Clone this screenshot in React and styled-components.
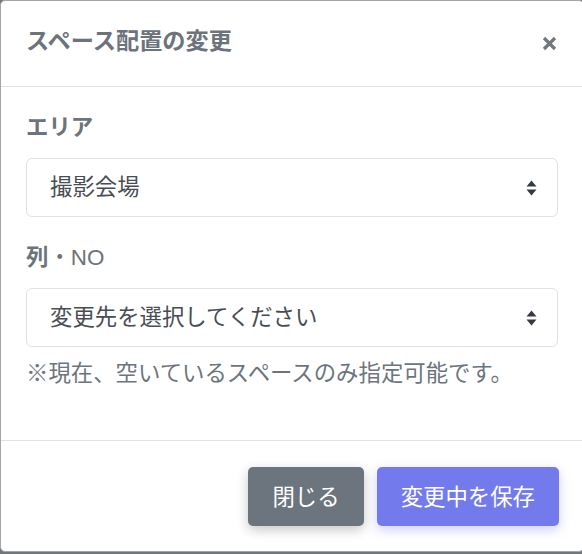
import styled, { createGlobalStyle } from "styled-components";

const GlobalStyle = createGlobalStyle`
  html, body {
    margin: 0;
    padding: 0;
    overflow: hidden;
    background: #70767c;
  }
  body {
    font-family: "Liberation Sans", "Noto Sans CJK JP", sans-serif;
  }
  * {
    box-sizing: border-box;
  }
`;

const colors = {
  gray: "#6c737b",
  text: "#474d54",
  line: "#dee2e6",
  secondary: "#6c757d",
  primary: "#737bec",
};

const CloseIcon = () => (
  <svg width="15" height="15" viewBox="0 0 15 15">
    <path
      d="M2 2 L13 13 M13 2 L2 13"
      stroke="#72777d"
      strokeWidth="3.2"
      strokeLinecap="butt"
      fill="none"
    />
  </svg>
);

const SortIcon = () => (
  <svg width="11" height="16" viewBox="0 0 11 16">
    <path d="M5.5 0.5 L10.5 6.5 L0.5 6.5 Z" fill="#343a40" />
    <path d="M0.5 9.5 L10.5 9.5 L5.5 15.5 Z" fill="#343a40" />
  </svg>
);

const App = () => {
  return (
    <>
      <GlobalStyle />
      <Dialog>
        <Header>
          <Title>スペース配置の変更</Title>
          <CloseButton aria-label="close">
            <CloseIcon />
          </CloseButton>
        </Header>
        <Body>
          <Label>エリア</Label>
          <SelectBox>
            <SelectText>撮影会場</SelectText>
            <SortIcon />
          </SelectBox>
          <Label>
            列<LabelLatin>・NO</LabelLatin>
          </Label>
          <SelectBox $last>
            <SelectText>変更先を選択してください</SelectText>
            <SortIcon />
          </SelectBox>
          <Note>※現在、空いているスペースのみ指定可能です。</Note>
        </Body>
        <Footer>
          <Button $bg={colors.secondary} $glow="rgba(0, 0, 0, 0.22)">
            閉じる
          </Button>
          <Button $bg={colors.primary} $glow="rgba(115, 123, 236, 0.35)">
            変更中を保存
          </Button>
        </Footer>
      </Dialog>
    </>
  );
};

export default App;

const Dialog = styled.div`
  width: 584px;
  height: 552px;
  background: #fff;
  border: 1px solid #a2a6ab;
  border-radius: 5px;
  display: flex;
  flex-direction: column;
`;

const Header = styled.div`
  height: 86px;
  padding: 0 25px;
  display: flex;
  align-items: center;
  justify-content: space-between;
  border-bottom: 1px solid ${colors.line};
`;

const Title = styled.h5`
  margin: 0;
  font-size: 23.2px;
  font-weight: 700;
  line-height: 1.2;
  color: ${colors.gray};
  margin-top: -3px;
`;

const CloseButton = styled.button`
  border: none;
  background: none;
  padding: 0;
  margin-right: 1px;
  display: flex;
  cursor: pointer;
`;

const Body = styled.div`
  padding: 24px 25px 50px 25px;
  display: flex;
  flex-direction: column;
  border-bottom: 1px solid ${colors.line};
`;

const Label = styled.label`
  font-size: 22.4px;
  font-weight: 700;
  line-height: 33px;
  color: ${colors.gray};
  margin-bottom: 14px;
`;

const LabelLatin = styled.span`
  font-weight: 400;
`;

const SelectBox = styled.div`
  height: 59px;
  border: 1px solid ${colors.line};
  border-radius: 6px;
  padding: 0 20px 0 23px;
  display: flex;
  align-items: center;
  justify-content: space-between;
  font-size: 22.4px;
  color: ${colors.text};
  margin-bottom: ${(props) => (props.$last ? "10px" : "24px")};
`;

const SelectText = styled.span`
  margin-top: -5px;
`;

const Note = styled.p`
  margin: 0;
  font-size: 22.4px;
  line-height: 33px;
  color: ${colors.secondary};
`;

const Footer = styled.div`
  padding: 26px 24px 24px 25px;
  display: flex;
  justify-content: flex-end;
  gap: 13px;
`;

const Button = styled.button`
  height: 59px;
  padding: 0 24px 4px;
  border: none;
  border-radius: 5px;
  background: ${(props) => props.$bg};
  color: #fff;
  font-family: inherit;
  font-size: 22.4px;
  box-shadow: 0 4px 12px ${(props) => props.$glow};
  cursor: pointer;
`;
